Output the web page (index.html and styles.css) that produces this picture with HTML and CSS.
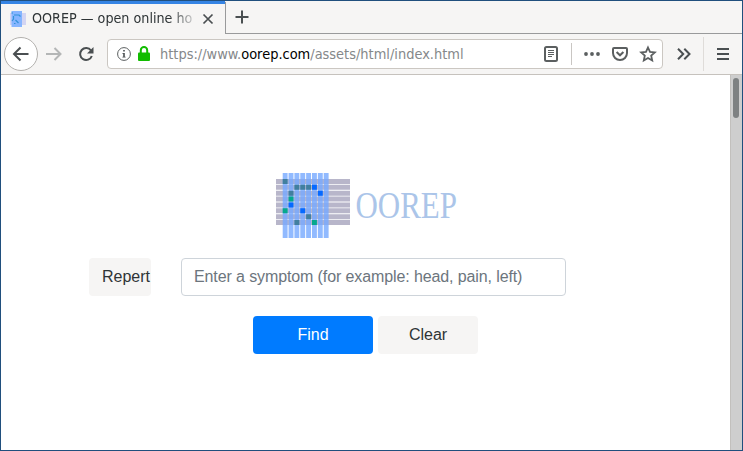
FILE: index.html
```html
<!DOCTYPE html>
<html lang="en">
<head>
<meta charset="utf-8">
<title>OOREP — open online homeopathic repertory</title>
<link rel="stylesheet" href="styles.css">
</head>
<body>
<div class="window">
  <div class="tabs">
    <div class="tab">
      <svg class="favicon" width="16" height="16" viewBox="0 0 16 16"><path fill="#d3d5f3" d="M0 2h16v12H0z"/><path fill="#86b5ff" d="M1.500 0h10.500v16H1.500z"/><path fill="none" stroke="#3292d8" stroke-width="1.200" d="M1.500 2h1.500M4 4h5l1.500 1.500M3.500 5v3l-1.500 2M5.500 9l3 3M4 12.500h1.500"/></svg>
      <span class="tab-title">OOREP — open online ho</span>
      <svg class="close" width="12" height="12" viewBox="0 0 12 12"><path d="M1.500 1.500l9 9M10.500 1.500l-9 9"/></svg>
    </div>
    <div class="tab-rest"><svg width="16" height="16" viewBox="0 0 16 16"><path d="M8 1.500v13M1.500 8h13"/></svg></div>
  </div>
  <div class="toolbar">
    <div class="back"><svg width="18" height="16" viewBox="0 0 18 16"><path d="M16.500 8H2M8.500 1.500L2 8l6.500 6.500"/></svg></div>
    <svg class="forward" width="18" height="16" viewBox="0 0 18 16"><path d="M1 8h14.500M9.500 2l6 6-6 6"/></svg>
    <svg class="reload" width="16" height="16" viewBox="0 0 16 16"><path d="M13 4.500A6 6 0 1 0 13.800 10"/><path class="solid" d="M15.500 1v6.500H9z"/></svg>
    <div class="urlbar">
      <svg class="info" width="14" height="14" viewBox="0 0 14 14"><circle cx="7" cy="7" r="6.400"/><path class="solid" d="M6.200 3h1.600v1.600H6.200zM5.400 6h2.400v3.800h.8v.8H5.400v-.8h.8V6.800h-.8z"/></svg>
      <svg class="lock" width="12" height="15" viewBox="0 0 12 15"><path fill="#12bc00" d="M1 6.500h10q1 0 1 1V14q0 1-1 1H1q-1 0-1-1V7.500q0-1 1-1z"/><path fill="none" stroke="#12bc00" stroke-width="2" d="M2.800 7V4.300a3.200 3.200 0 0 1 6.400 0V7"/></svg>
      <span class="url">https://www.<b>oorep.com</b>/assets/html/index.html</span>
      <svg class="reader" width="14" height="16" viewBox="0 0 14 16"><rect x="1" y="1" width="12" height="14" rx="1.500" stroke-width="2"/><path stroke-width="1" d="M4 4.500h6M4 6.500h6M4 8.500h6M4 10.500h4"/></svg>
      <i class="divider"></i>
      <svg class="dots" width="16" height="4" viewBox="0 0 16 4"><circle cx="2" cy="2" r="1.900"/><circle cx="8" cy="2" r="1.900"/><circle cx="14" cy="2" r="1.900"/></svg>
      <svg class="pocket" width="16" height="14" viewBox="0 0 16 14"><path d="M2 1h12q1 0 1 1v4a7 7 0 0 1-14 0V2q0-1 1-1zM4.600 5L8 8.300 11.400 5"/></svg>
      <svg class="star" width="16" height="16" viewBox="0 0 16 16"><path d="M8 1.500l2 4.400 4.800.5-3.600 3.200 1 4.900L8 12l-4.200 2.500 1-4.900L1.200 6.400 6 5.900z"/></svg>
    </div>
    <svg class="more" width="14" height="12" viewBox="0 0 14 12"><path d="M1 .8L6.200 6 1 11.200M7.300.8L12.500 6l-5.200 5.200"/></svg>
    <div class="menu"><svg width="12" height="12" viewBox="0 0 12 12"><path d="M0 1h12M0 6h12M0 11h12"/></svg></div>
  </div>
  <div class="content">
    <main class="page">
      <svg class="logo" width="182" height="66" viewBox="276 173 182 66">
        <path stroke="#b8b6ca" stroke-width="74" stroke-dasharray="5 .86" d="M313 179v46"/>
        <path stroke="#76a9ff" stroke-opacity=".8" stroke-width="65" stroke-dasharray="4.900 .96" d="M282.700 205.500h45.920"/>
        <path fill="#417f9f" d="M282.700 179h4.900v5h-4.900zM294.420 184.860h4.900v5h-4.900zM300.280 184.860h4.900v5h-4.900zM306.140 184.860h4.900v5h-4.900zM288.560 190.720h4.900v5h-4.900zM306.140 214.160h4.900v5h-4.900zM294.420 220.020h4.900v5h-4.900z"/>
        <path fill="#0569ff" d="M312 184.860h4.900v5H312zM317.860 190.720h4.900v5h-4.900zM288.560 202.440h4.900v5h-4.900zM300.280 208.300h4.900v5h-4.900z"/>
        <path fill="#05a88e" d="M288.560 196.580h4.900v5h-4.900zM282.700 208.300h4.900v5h-4.900zM312 220.020h4.900v5H312z"/>
        <text x="355.500" y="218" textLength="101.500" lengthAdjust="spacingAndGlyphs">OOREP</text>
      </svg>
      <div class="search">
        <div class="select">Repert</div>
        <input class="symptom" placeholder="Enter a symptom (for example: head, pain, left)">
      </div>
      <div class="actions"><button class="find">Find</button><button class="clear">Clear</button></div>
    </main>
    <div class="scrollbar"><div class="thumb"></div></div>
  </div>
</div>
</body>
</html>
```
FILE: styles.css
```css
* { box-sizing: border-box; }
body { margin: 0; overflow: hidden; }
.window { width: 743px; height: 451px; border: 1px solid #204f7d; background: #f6f5f4; display: flex; flex-direction: column; font-family: "DejaVu Sans Condensed", "DejaVu Sans", sans-serif; }
svg { display: block; flex: none; fill: none; stroke: #4a4f51; stroke-width: 2; overflow: visible; }
svg .solid { fill: #4a4f51; stroke: none; }
.favicon, .lock, .logo { stroke: none; }
.tabs { display: flex; height: 33px; flex: none; }
.tab { width: 224px; border-top: 3px solid #3584e4; display: flex; align-items: center; padding-left: 9px; }
.tab-title { width: 167px; margin: -3px 0 0 6px; font-size: 14.2px; line-height: 18px; color: #2e3436; white-space: nowrap; overflow: hidden; -webkit-mask-image: linear-gradient(to right, #000 138px, transparent 167px); mask-image: linear-gradient(to right, #000 138px, transparent 167px); }
.close { margin-left: 3px; stroke-width: 1.7; }
.tab-rest { flex: 1; margin-top: 1px; border-left: 1px solid #999a9b; border-bottom: 1px solid #999a9b; padding: 7px 0 0 8px; }
.toolbar { height: 41px; flex: none; display: flex; align-items: center; border-bottom: 1px solid #c6c2bd; padding-left: 3px; }
.back { width: 34px; height: 34px; border: 1px solid #b3b1ae; border-radius: 50%; background: #fff; display: flex; align-items: center; justify-content: center; }
.forward { margin-left: 7px; stroke: #b4b6b6; }
.reload { margin-left: 15px; }
.urlbar { width: 556px; height: 30px; margin-left: 13px; border: 1px solid #cbc7c2; border-radius: 4px; background: #fff; display: flex; align-items: center; padding-left: 9px; }
.urlbar svg { stroke: #5b5f60; }
.urlbar .info { stroke-width: 1; }
.urlbar .lock { margin: 0 0 1px 7px; stroke: none; }
.url { width: 384px; margin-left: 10px; font-size: 14.45px; line-height: 20px; color: #85888a; white-space: nowrap; }
.url b { font-weight: normal; color: #000; }
.divider { width: 1px; height: 22px; background: #c9c6c3; margin: 0 12px 0 13px; }
.urlbar .dots { fill: #5b5f60; stroke: none; }
.pocket { margin-left: 12px; }
.star { margin-left: 12px; }
.urlbar .star { stroke-width: 1.8; }
.more { margin-left: 14px; }
.menu { margin-left: 12px; height: 34px; border-left: 1px solid #dfdcd9; padding-left: 13px; display: flex; align-items: center; }
.content { flex: 1; display: flex; background: #fff; }
.page { flex: 1; padding-top: 98px; font: 16px/24px "Liberation Sans", Arial, sans-serif; }
.logo { margin-left: 275px; }
.logo text { font-family: "Liberation Serif", serif; font-size: 38px; fill: #abc5e9; }
.search { display: flex; margin: 19px 0 0 88px; gap: 30px; }
.select { width: 62px; height: 38px; padding: 7px 0 7px 13px; border-radius: 4px; background: #f6f5f4; color: #2e3436; overflow: hidden; }
.symptom { width: 385px; height: 38px; border: 1px solid #ced4da; border-radius: 4px; padding: 6px 12px; font: inherit; letter-spacing: -0.11px; background: #fff; }
.symptom::placeholder { color: #6c757d; opacity: 1; }
.actions { display: flex; gap: 5px; margin: 20px 0 0 252px; }
button { height: 38px; border: 0; border-radius: 4px; padding: 0; font: inherit; }
.find { width: 120px; background: #007bff; color: #fff; }
.clear { width: 100px; background: #f6f5f4; color: #2e3436; }
.scrollbar { width: 12px; background: #cecece; border-left: 1px solid #c2c0bd; padding: 3px 3px 0 2px; }
.thumb { width: 6px; height: 40px; border-radius: 3px; background: #7e8182; }
```
